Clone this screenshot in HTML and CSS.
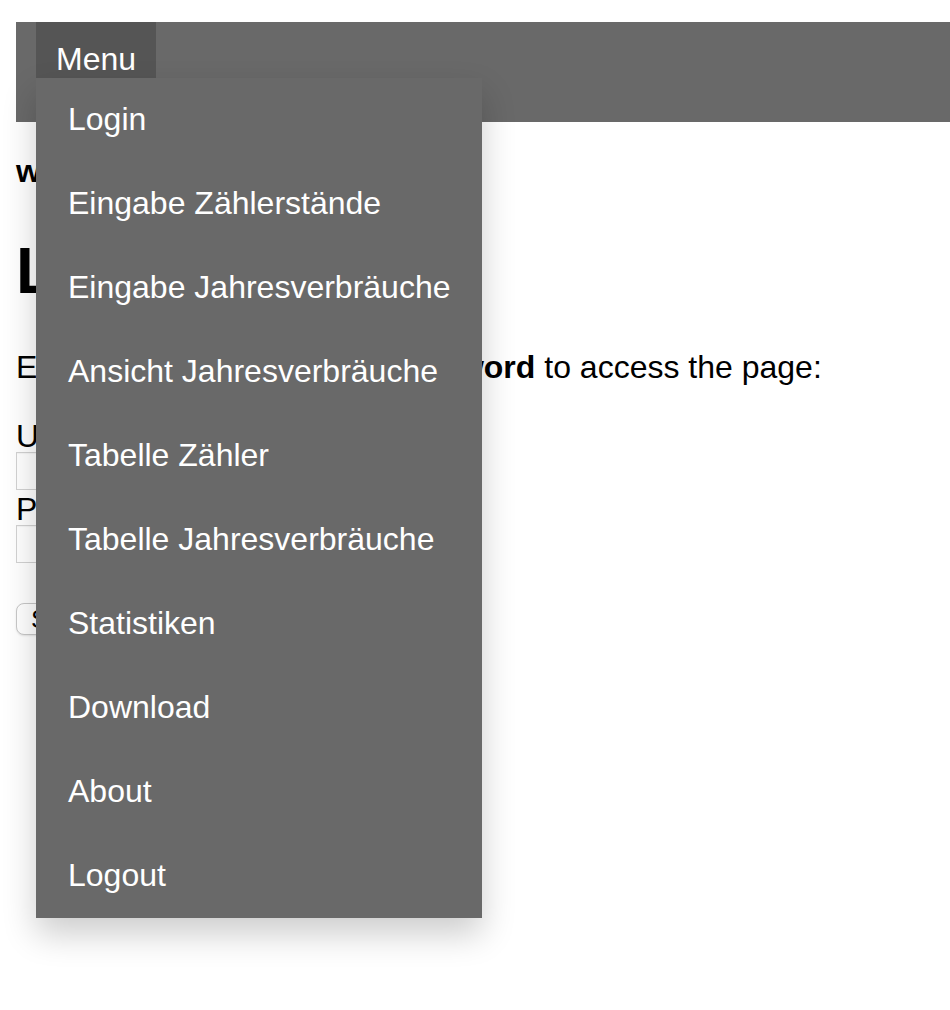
FILE: index.html
```html
<!DOCTYPE html>
<html lang="de">
<head>
<meta charset="utf-8">
<title>Login</title>
<link rel="stylesheet" href="styles.css">
</head>
<body>
<div class="page">
  <nav class="navbar">
    <div class="dropdown">
      <button class="dropbtn" type="button">Menu</button>
      <div class="dropdown-content">
        <a href="#">Login</a>
        <a href="#">Eingabe Zählerstände</a>
        <a href="#">Eingabe Jahresverbräuche</a>
        <a href="#">Ansicht Jahresverbräuche</a>
        <a href="#">Tabelle Zähler</a>
        <a href="#">Tabelle Jahresverbräuche</a>
        <a href="#">Statistiken</a>
        <a href="#">Download</a>
        <a href="#">About</a>
        <a href="#">Logout</a>
      </div>
    </div>
  </nav>
  <main class="content">
    <div class="welcome">welcome</div>
    <h1 class="title">Login</h1>
    <p class="intro">Enter your username and <b>password</b> to access the page:</p>
    <form class="login-form">
      <label class="field-label" for="user">Username:</label>
      <input class="field-input" id="user" type="text">
      <label class="field-label" for="pass">Password:</label>
      <input class="field-input" id="pass" type="password">
      <button class="submit-btn" type="button">Submit</button>
    </form>
  </main>
</div>
</body>
</html>
```
FILE: styles.css
```css
html, body {
  margin: 0;
  padding: 0;
  background: #ffffff;
  min-height: 1010px;
}

body {
  font-family: "Liberation Sans", Arial, Helvetica, sans-serif;
  color: #000000;
}

.page {
  padding: 22px 0 0 16px;
  min-height: 1000px;
}

.navbar {
  height: 100px;
  background: #696969;
  display: flex;
  padding-left: 20px;
  position: relative;
}

.dropdown {
  position: relative;
  align-self: flex-start;
}

.dropbtn {
  display: block;
  font-family: inherit;
  font-size: 32px;
  line-height: 36px;
  color: #ffffff;
  background: #555555;
  border: none;
  margin: 0;
  padding: 19px 20px 1px;
  height: 56px;
  cursor: pointer;
}

.dropdown-content {
  position: absolute;
  top: 56px;
  left: 0;
  z-index: 10;
  background: #696969;
  box-shadow: 0 16px 32px 0 rgba(0, 0, 0, 0.2);
  display: flex;
  flex-direction: column;
  white-space: nowrap;
}

.dropdown-content a {
  display: block;
  color: #ffffff;
  text-decoration: none;
  font-size: 32px;
  line-height: 36px;
  padding: 23px 32px 25px;
}

.content {
  display: flex;
  flex-direction: column;
  align-items: flex-start;
}

.welcome {
  margin-top: 31px;
  font-size: 32px;
  line-height: 36px;
  font-weight: bold;
}

.title {
  margin: 46px 0 0;
  font-size: 64px;
  line-height: 72px;
  font-weight: bold;
}

.intro {
  margin: 42px 0 0;
  font-size: 32px;
  line-height: 36px;
}

.login-form {
  margin-top: 35px;
  display: flex;
  flex-direction: column;
  align-items: flex-start;
}

.field-label {
  font-size: 32px;
  line-height: 32px;
}

.field-input {
  box-sizing: border-box;
  width: 300px;
  height: 38px;
  margin: 0 0 3px;
  border: 1px solid #d2d2d2;
  border-radius: 0;
  background: #ffffff;
  box-shadow: inset 0 1px 1px rgba(0, 0, 0, 0.04);
  font-size: 26px;
  padding: 0 6px;
}

.login-form .field-input:last-of-type {
  margin-bottom: 40px;
}

.submit-btn {
  box-sizing: border-box;
  height: 32px;
  padding: 0 14px;
  font-family: inherit;
  font-size: 26px;
  line-height: 30px;
  background: #ffffff;
  border: 1px solid #c8c8c8;
  border-radius: 8px;
  box-shadow: 0 1px 2px rgba(0, 0, 0, 0.1);
  color: #000000;
}
```
